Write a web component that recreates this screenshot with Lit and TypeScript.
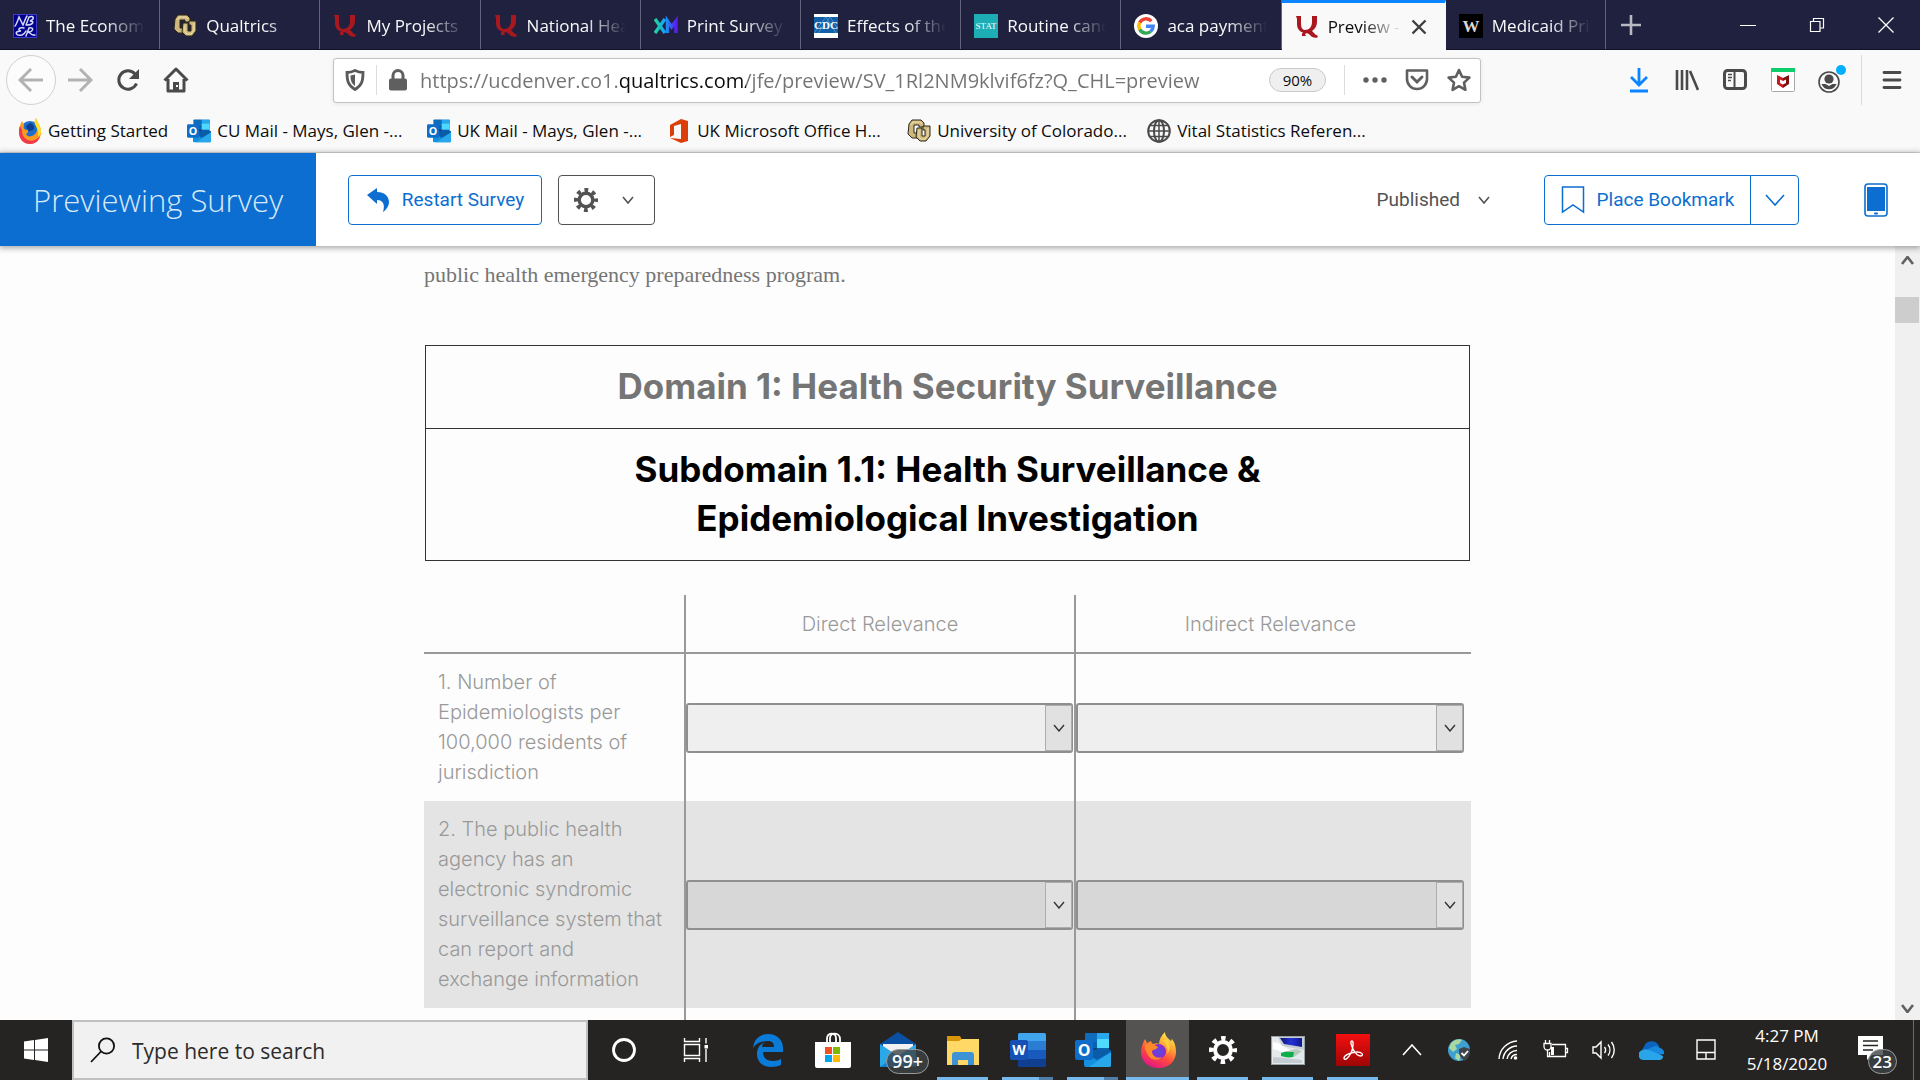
import { LitElement, html, svg, css, nothing } from "lit";
import type { TemplateResult } from "lit";
import { customElement } from "lit/decorators.js";
import { classMap } from "lit/directives/class-map.js";

/** Wraps drawing content in an svg of the given size. */
const draw = (w: number, h: number, content: unknown, viewBox = `0 0 ${w} ${h}`) =>
  html`<svg width=${w} height=${h} viewBox=${viewBox} aria-hidden="true">${content}</svg>`;

/* ---------- favicons and bookmark icons, 24px ---------- */

const nber = draw(24, 24, svg`
  <rect width="24" height="24" fill="#00008c"/>
  <rect x="0.5" y="0.5" width="23" height="23" fill="none" stroke="#3c3cc8"/>
  <g fill="none" stroke="#d4d8f4" stroke-width="1.500" stroke-linecap="round">
    <path d="M2 12c1-1 3-6 4-9l4 8c1-2 2-6 4-9M13 11l3-8c5-2 6 2 1 4c5 0 3 4-3 4"/>
    <path d="M11 14c-5-1-7 2-3 3c-7 0-6 5 1 4c2-1 3-2 4-4M13 22l3-8c6-1 4 4-1 4c2 0 3 4 7 3"/>
  </g>`);

const cu = draw(24, 24, svg`
  <path d="M2 5l3-4h9l3 3v4h-5V6H7v8h3v5H5l-4-4z" fill="#cfb87c" stroke="#2b2619" stroke-width="1"/>
  <path d="M10 9h5v8h3V11h-2V7h7v10l-4 5h-6l-4-4z" fill="#cfb87c" stroke="#2b2619" stroke-width="1"/>
  <path d="M4 6l2-3h7l2 2M12 11v7l2 2h4l3-4V9" fill="none" stroke="#f0e0ae" stroke-width="1"/>`);

const qualtrics = draw(24, 24, svg`
  <path d="M1 1h5v7c0 4 1 7 4 7c4 0 7-3 7-8V1h5v6c0 4-2 7-5 9l5 5l-5 1l-4-5c-7 2-11-2-11-8V4z" fill="#a9181f"/>
  <path d="M7 19c0-3 6-4 8-1l2 3l5-1l1 2c-3 2-6 0-8-2c-2-2-4-2-5-1l1 2h-4z" fill="#a9181f"/>`);

const xm = draw(24, 24, svg`
  <defs><linearGradient id="xm-grad" x1="0" y1="0" x2="1" y2="0">
    <stop offset="0" stop-color="#21d59b"/><stop offset="0.45" stop-color="#12a5f4"/><stop offset="1" stop-color="#5a1cf2"/>
  </linearGradient></defs>
  <g fill="none" stroke="url(#xm-grad)" stroke-width="3.4">
    <path d="M1 5l10 14M11 5L1 19M13.5 19V7l4.200 6l4.300-6v12"/>
  </g>`);

const cdc = draw(24, 24, svg`
  <rect width="24" height="24" fill="#fff"/>
  <rect y="3" width="24" height="16" fill="#1160a8"/>
  <path d="M0 19L12 3M4 19L16 3M12 3l10 16M16 3l8 12" stroke="#5c9bd2" stroke-width="0.8"/>
  <text x="12" y="15" text-anchor="middle" font-family="Liberation Serif, serif" font-weight="bold" font-size="11" fill="#fff">CDC</text>`);

const stat = draw(24, 24, svg`
  <rect width="24" height="24" fill="#1cadb5"/>
  <text x="12" y="15" text-anchor="middle" font-family="Liberation Serif, serif" font-size="9" fill="#fff">STAT</text>`);

const google = draw(24, 24, svg`
  <circle cx="12" cy="12" r="12" fill="#fff"/>
  <g fill="none" stroke-width="3.4">
    <path d="M17.400 7.200A7.200 7.200 0 0 0 5.700 8.600" stroke="#ea4335"/>
    <path d="M5.700 8.600A7.200 7.200 0 0 0 5.700 15.400" stroke="#fbbc05"/>
    <path d="M5.700 15.400A7.200 7.200 0 0 0 16.600 17.500" stroke="#34a853"/>
    <path d="M16.600 17.500A7.200 7.200 0 0 0 19.200 12.200H12" stroke="#4285f4"/>
  </g>`);

const wFav = draw(24, 24, svg`
  <rect width="24" height="24" fill="#000"/>
  <text x="12" y="18" text-anchor="middle" font-family="Liberation Serif, serif" font-weight="bold" font-size="17" fill="#d8d8d8">W</text>`);

const flame = (size: number) => draw(size, size, svg`
  <defs>
    <linearGradient id="ff-body" x1="0.8" y1="0" x2="0.3" y2="1">
      <stop offset="0" stop-color="#fff44f"/><stop offset="0.35" stop-color="#ffa436"/>
      <stop offset="0.65" stop-color="#ff4a3c"/><stop offset="1" stop-color="#e31587"/>
    </linearGradient>
    <radialGradient id="ff-core"><stop offset="0" stop-color="#5a4be0"/><stop offset="1" stop-color="#8a2bd0"/></radialGradient>
  </defs>
  <path d="M18 36C8 36 1 29 1 20C1 15 3 11 5 7l2 4l4-2c0 1 1 2 2 3c3-1 5-1 6 0c0-4 2-8 6-12c0 4 3 6 6 9c1-1 1-2 0-3c4 4 5 9 5 14c0 9-7 16-17 16z" fill="url(#ff-body)"/>
  <circle cx="18.500" cy="19.500" r="7.500" fill="url(#ff-core)"/>
  <path d="M5 13c4-2 9-1 13 2c-1 3-5 2-6 4c0 5 5 8 10 6c-3 4-11 4-14-2c-2-4-4-7-3-10z" fill="#ff8a2a"/>
  <path d="M22 8c4 3 7 8 5 14c4-5 3-10 0-14z" fill="#ffd23c"/>`, "0 0 36 36");

const oldFlame = draw(24, 28, svg`
  <circle cx="12" cy="14" r="10" fill="#1f6fd0"/>
  <path d="M12 6c2 0 5 3 4 6c-1 2-4 1-5 3c-1-3-3-4-3-6z" fill="#0d3f8f"/>
  <path d="M18 1c1 4 5 8 5 14c0 7-5 12-11 12S1 22 1 15C1 11 2 8 4 4l2 4c-1 3 0 4 2 5c3 0 3 2 0 4c1 3 5 3 8 1c4-3 4-7 1-11c-1-2 0-4 1-6z" fill="#ff9a1e"/>
  <path d="M1 15c0 8 5 12 11 12c5 0 9-3 10-8c-4 5-10 6-14 3c-3-2-4-5-4-9l-2-4c-1 2-1 4-1 6z" fill="#f03a4c"/>
  <path d="M18 1c1 4 5 8 5 14c-1 3-2 4-3 5c1-6-1-9-3-13c-1-2 0-4 1-6z" fill="#ffe226"/>`);

const outlook = (size: number) => draw(size, size, svg`
  <rect x="10" y="1" width="24" height="26" rx="1" fill="#0a63ad"/>
  <rect x="10" y="1" width="12" height="9" fill="#0f6cbd"/>
  <rect x="22" y="1" width="12" height="9" fill="#28a8ea"/>
  <rect x="22" y="7" width="12" height="9" fill="#50d9ff"/>
  <path d="M10 16h12v6H10z" fill="#14447d"/>
  <path d="M9 20h27v13a2 2 0 0 1-2 2H11a2 2 0 0 1-2-2z" fill="#1490df"/>
  <path d="M36 20v13a2 2 0 0 1-2 2H14z" fill="#28a8ea"/>
  <path d="M9 20l13 8L36 20v-2H9z" fill="#0a5ca8"/>
  <rect x="0" y="8" width="18" height="20" rx="2" fill="#0f6cc8"/>
  <text x="9" y="24" text-anchor="middle" font-family="Open Sans, sans-serif" font-weight="bold" font-size="16" fill="#fff">O</text>`, "0 0 36 36");

const office = draw(24, 24, svg`
  <path d="M3 6L14 0l7 2v20l-7 2L3 19l11 1V5L7 7v9l-4 2z" fill="#dc3e0a"/>`);

const globe = draw(24, 24, svg`
  <g fill="none" stroke="#4a4a4a" stroke-width="2">
    <circle cx="12" cy="12" r="10.800"/><ellipse cx="12" cy="12" rx="5" ry="10.800"/>
    <path d="M12 1v22M1 12h22M3 6.500h18M3 17.500h18" stroke-width="1.500"/>
  </g>`);

/* ---------- browser toolbar icons ---------- */

const backIcon = draw(26, 26, svg`<path d="M25 13H3M13 2L2 13l11 11" fill="none" stroke="#b2b2b2" stroke-width="3"/>`);
const forwardIcon = draw(26, 26, svg`<path d="M1 13h22M13 2l11 11l-11 11" fill="none" stroke="#b2b2b2" stroke-width="3"/>`);
const reloadIcon = draw(24, 24, svg`
  <path d="M20.500 15.500A9.200 9.200 0 1 1 19 6" fill="none" stroke="#4a4a4a" stroke-width="3"/>
  <path d="M23 1v10H13z" fill="#4a4a4a"/>`);
const homeIcon = draw(26, 26, svg`
  <path d="M1.500 13.500L13 2l11.500 11.500M5 12v12h16V12" fill="none" stroke="#4a4a4a" stroke-width="3" stroke-linejoin="round"/>
  <path d="M10 24v-9h6v9z" fill="#4a4a4a"/><rect x="13" y="18" width="2" height="2" fill="#f9f9fa"/>`);
const shieldIcon = draw(20, 22, svg`
  <path d="M10 1.500c3 1.500 6 2 8 2c0 8-1 13-8 17c-7-4-8-9-8-17c2 0 5-.5 8-2z" fill="none" stroke="#5a5a5a" stroke-width="2.800"/>
  <path d="M10 5.500l-4.500 1c0 5 1 8 4.500 10.500z" fill="#5a5a5a"/>`);
const lockIcon = draw(20, 22, svg`
  <path d="M5 10V6.500a5 5 0 0 1 10 0V10" fill="none" stroke="#5f5f5f" stroke-width="3"/>
  <rect x="1" y="9.500" width="18" height="12" rx="2" fill="#5f5f5f"/>`);
const dotsIcon = draw(24, 24, svg`<g fill="#5f5f5f"><circle cx="3" cy="12" r="2.700"/><circle cx="12" cy="12" r="2.700"/><circle cx="21" cy="12" r="2.700"/></g>`);
const pocketIcon = draw(24, 24, svg`
  <path d="M2 2.500h20V11a10 10 0 0 1-20 0z" fill="none" stroke="#5f5f5f" stroke-width="2.600" stroke-linejoin="round"/>
  <path d="M7 9l5 5l5-5" fill="none" stroke="#5f5f5f" stroke-width="3" stroke-linecap="round"/>`);
const starIcon = draw(24, 24, svg`
  <path d="M12 2l3.100 6.700l7.300.9l-5.400 5l1.400 7.200L12 18.200l-6.400 3.600L7 14.600l-5.400-5l7.300-.9z" fill="none" stroke="#5f5f5f" stroke-width="2.600" stroke-linejoin="round"/>`);
const downloadIcon = draw(20, 26, svg`
  <path d="M10 1v17M2 10l8 8l8-8M1 24h18" fill="none" stroke="#0a84ff" stroke-width="2.800"/>`);
const libraryIcon = draw(24, 22, svg`
  <path d="M2 1v20M7 1v20M12 1v20M15 2l8 19" fill="none" stroke="#4a4a4a" stroke-width="2.600"/>`);
const sidebarIcon = draw(24, 22, svg`
  <rect x="1.500" y="1.500" width="21" height="18" rx="3" fill="none" stroke="#4a4a4a" stroke-width="3"/>
  <path d="M11.500 2v17" stroke="#4a4a4a" stroke-width="2"/><path d="M5 5.500h4M5 8.500h4M5 11.500h3" stroke="#4a4a4a" stroke-width="1.300"/>`);
const mcafeeIcon = draw(24, 24, svg`
  <rect x="0.500" y="0.500" width="23" height="23" rx="1" fill="#fff" stroke="#a8a8a8"/>
  <rect width="24" height="4" fill="#0cce6b"/>
  <path d="M6 7l6 3v3l-3-1.500V15l3 1.500V20l-6-4z" fill="#c8191f"/>
  <path d="M18 7l-6 3v3l3-1.500V15l-3 1.500V20l6-4z" fill="#7e1013"/>`);
const accountIcon = draw(30, 30, svg`
  <circle cx="13" cy="17" r="10" fill="none" stroke="#4a4a4a" stroke-width="1.600"/>
  <circle cx="13" cy="14" r="4.600" fill="#4a4a4a"/><path d="M5.500 19h4l3.500 2l3.500-2h4a8 8 0 0 1-15 0z" fill="#4a4a4a"/>
  <circle cx="25" cy="5" r="5" fill="#00b0ff"/>`);
const menuIcon = draw(20, 20, svg`<path d="M2 2.500h16M2 10h16M2 17.500h16" stroke="#4a4a4a" stroke-width="2.800" stroke-linecap="round"/>`);
const closeTab = draw(16, 16, svg`<path d="M1.500 1.500l13 13M14.500 1.500l-13 13" stroke="#3f3f3f" stroke-width="2.400"/>`);
const plusIcon = draw(22, 22, svg`<path d="M11 1v20M1 11h20" stroke="#b9b9c4" stroke-width="2.600"/>`);
const minimizeIcon = draw(16, 16, svg`<path d="M0 8.500h16" stroke="#fff" stroke-width="1"/>`);
const restoreIcon = draw(16, 16, svg`<path d="M1.500 4.500h9.500v10H1.500zM4.500 4V1.500h10v9.500H11.500" fill="none" stroke="#fff" stroke-width="1.200"/>`);
const closeWindow = draw(16, 16, svg`<path d="M0.500 0.500l15 15M15.500 0.500l-15 15" stroke="#fff" stroke-width="1.300"/>`);

/* ---------- survey preview icons ---------- */

const gear = (size: number, color: string) => draw(size, size, svg`
  <circle cx="12" cy="12" r="6.800" fill="none" stroke=${color} stroke-width="3.400"/>
  <circle cx="12" cy="12" r="10" fill="none" stroke=${color} stroke-width="4" stroke-dasharray="3.8 4.054" stroke-dashoffset="1.900"/>`, "0 0 24 24");
const undoIcon = draw(24, 24, svg`<path d="M1 7L11 0v4c9 0 12 6 12 10c0 4-3 8-6 10c2-6 1-12-6-12v4z" fill="#0b6ed0"/>`);
const bookmarkIcon = draw(24, 28, svg`<path d="M1.500 1h21v25L12 19L1.500 26z" fill="none" stroke="#0b6ed0" stroke-width="1.500"/>`);
const phoneIcon = draw(24, 34, svg`
  <rect x="1" y="1" width="22" height="32" rx="3" fill="#fff" stroke="#0b6ed0" stroke-width="1.600"/>
  <rect x="3" y="4" width="18" height="24" fill="#0b6ed0"/><rect x="10" y="29.500" width="4" height="2" rx="1" fill="#0b6ed0"/>`);
const chevron = (w: number, h: number, color: string, stroke: number) =>
  draw(w, h, svg`<path d="M1 1L${w / 2} ${h - 1}L${w - 1} 1" fill="none" stroke=${color} stroke-width=${stroke}/>`);
const chevronUp = (w: number, h: number, color: string, stroke: number) =>
  draw(w, h, svg`<path d="M1 ${h - 1}L${w / 2} 1L${w - 1} ${h - 1}" fill="none" stroke=${color} stroke-width=${stroke}/>`);

/* ---------- taskbar icons ---------- */

const windowsLogo = draw(24, 24, svg`<path d="M0 3.500l10-1.400v9.400H0zM11 2l13-2v11.500H11zM0 12.500h10v9.400L0 20.500zM11 12.500h13V24l-13-2z" fill="#fff"/>`);
const magnifier = draw(26, 26, svg`<circle cx="16.500" cy="9" r="7.600" fill="none" stroke="#111" stroke-width="1.800"/><path d="M11 14.500L1 25" stroke="#111" stroke-width="1.800"/>`);
const cortana = draw(26, 26, svg`<circle cx="13" cy="13" r="10.500" fill="none" stroke="#fff" stroke-width="2.800"/>`);
const taskView = draw(26, 26, svg`
  <path d="M1.500 7.500h15v11h-15zM1.500 1v3.500h15V1M1.500 25v-3.500h15V25M23 1v5.500M23 12v13" fill="none" stroke="#fff" stroke-width="1.400"/>
  <rect x="21.500" y="8" width="3.500" height="3.500" fill="#fff"/>`);
const edge = draw(32, 34, svg`
  <path d="M1 15C2 6 8 1 16 1c9 0 15 6 15 14v4H11c0 6 4 9 10 9c3 0 6-1 8-2v6c-3 1-6 2-10 2C10 34 5 28 5 21c0-6 3-10 8-12c-2 1-3 3-3 5h12c0-4-2-6-6-6C9 8 4 10 1 15z" fill="#0a7bd9"/>`);
const store = draw(36, 36, svg`
  <path d="M12 12V7c0-7 9-7 9-1v6M15 12V6c0-6 10-6 10 1v5" fill="none" stroke="#fff" stroke-width="1.800"/>
  <path d="M0 10h36v24a2 2 0 0 1-2 2H2a2 2 0 0 1-2-2z" fill="#fff"/>
  <rect x="10" y="15" width="7" height="7" fill="#f25022"/><rect x="18" y="15" width="7" height="7" fill="#7fba00"/>
  <rect x="10" y="23" width="7" height="7" fill="#00a4ef"/><rect x="18" y="23" width="7" height="7" fill="#ffb900"/>`);
const mail = draw(36, 36, svg`
  <path d="M0 12L18 0l18 12v3H0z" fill="#0b4fa3"/>
  <path d="M3 12h30v6L18 28L3 18z" fill="#f2f2f2"/>
  <path d="M0 12l18 12l18-12v22a1 1 0 0 1-1 1H1a1 1 0 0 1-1-1z" fill="#29a9ea"/>
  <path d="M0 35L18 22l18 13z" fill="#1681d1"/>
  <path d="M3 12h30L18 23z" fill="#f2f2f2"/>`);
const explorer = draw(34, 32, svg`
  <path d="M1 2h13l2 4v6H1z" fill="#d89508"/>
  <path d="M1 7h12l3-2h17v26H1z" fill="#ffd866"/>
  <path d="M6 31V21a3 3 0 0 1 3-3h16a3 3 0 0 1 3 3v10h-6v-5H12v5z" fill="#3d93d6"/>`);
const word = draw(36, 36, svg`
  <rect x="8" y="1" width="28" height="34" rx="2" fill="#185abd"/>
  <path d="M8 9V3a2 2 0 0 1 2-2h24a2 2 0 0 1 2 2v6z" fill="#41a5ee"/>
  <rect x="8" y="9" width="28" height="9" fill="#2b7cd3"/><path d="M8 27h28v6a2 2 0 0 1-2 2H10a2 2 0 0 1-2-2z" fill="#103f91"/>
  <rect x="0" y="8" width="18" height="20" rx="2" fill="#1650b4"/>
  <text x="9" y="23" text-anchor="middle" font-family="Open Sans, sans-serif" font-weight="bold" font-size="14" fill="#fff">W</text>`);
const monitorApp = draw(34, 30, svg`
  <defs><linearGradient id="mon-screen" x1="0" y1="0" x2="1" y2="0"><stop offset="0" stop-color="#0d1470"/><stop offset="0.5" stop-color="#2233d8"/><stop offset="1" stop-color="#10188c"/></linearGradient></defs>
  <rect x="0.500" y="1.500" width="33" height="28" fill="#e4e9eb" stroke="#98a3a8"/>
  <path d="M7 2h26v13l-22-4z" fill="#c6ced3"/><path d="M9 3h22v9l-18-3z" fill="url(#mon-screen)"/>
  <path d="M2 7l5 1l15 9l-4 2L2 14z" fill="#fff"/>
  <path d="M13 17l12-3l6 2l-8 6l-11-1z" fill="#b5c9bd"/>
  <path d="M10 18c4-2 8-1 13-1l-1 5c-5 1-8 0-12-1z" fill="#0fae4c"/><path d="M2 22l12 1l17 2v3H2z" fill="#c5cdd2"/>`);
const acrobat = draw(34, 32, svg`
  <defs><linearGradient id="pdf-bg" x1="0" y1="0" x2="0" y2="1"><stop offset="0" stop-color="#f40f0f"/><stop offset="1" stop-color="#9c0606"/></linearGradient></defs>
  <rect width="34" height="32" fill="url(#pdf-bg)"/>
  <path d="M16 7c-2 0-1 4 1 8c2 4 5 7 8 7c3-1 1-4-4-4c-5 0-13 3-13 6c0 3 4 1 7-5c2-4 3-12 1-12z" fill="none" stroke="#fff" stroke-width="1.400"/>`);
const shieldGlobe = draw(24, 28, svg`
  <circle cx="11" cy="14" r="11" fill="#3f9fd0"/>
  <path d="M3 7c5-5 10-4 11-3l-3 4l-4 1l2 4l-4 3l-4-4zM8 17l5 2l-2 6l-4-3z" fill="#a9d8a0"/>
  <path d="M11 13l5-2l6 2c0 6-1 9-5 12c-5-3-6-6-6-12z" fill="#3f444a"/><path d="M13.500 17l2.500 2.500l4-4.500" fill="none" stroke="#fff" stroke-width="1.800"/>`);
const wifi = draw(20, 20, svg`
  <g fill="none" stroke="#fff" stroke-width="1.400"><path d="M1 19A19 19 0 0 1 19 1"/><path d="M5 19A14.500 14.500 0 0 1 19 6"/><path d="M9 19A10 10 0 0 1 19 10.500"/><path d="M13 19A6 6 0 0 1 19 14.500"/></g>
  <circle cx="17.500" cy="18" r="1.800" fill="#fff"/>`);
const battery = draw(26, 20, svg`
  <path d="M9 4.500h13.500v12H6.500V12M23 8.500h1.500v4H23M2.500 0v3M6.500 0v3M1 3.500h7v3a3.500 3.500 0 0 1-7 0zM4.500 10v6.500H7" fill="none" stroke="#fff" stroke-width="1.300"/>
  <rect x="8" y="7" width="3" height="8" fill="#fff"/>`);
const speaker = draw(24, 20, svg`
  <path d="M1 7h3l5-5v16l-5-5H1zM12.500 7a5 5 0 0 1 0 6M16 4.500a9 9 0 0 1 0 11M19.500 2a13 13 0 0 1 0 16" fill="none" stroke="#fff" stroke-width="1.400"/>`);
const cloud = draw(26, 22, svg`
  <path d="M5 16a5 5 0 0 1 0-8a8 8 0 0 1 15-1l-6 9z" fill="#0a64c0"/>
  <path d="M9 10l7-3a5 5 0 0 1 5 2a5 5 0 0 1 4 6l-12 2z" fill="#1788de"/>
  <path d="M5 21a5 5 0 0 1-1-10a7 7 0 0 1 6 0l14 6a4 4 0 0 1-3 4z" fill="#29a6ea"/>`);
const touchpad = draw(20, 22, svg`<path d="M1 1h18v19H1zM1 13.500h18M10 13.500V20" fill="none" stroke="#fff" stroke-width="1.400"/>`);
const notes = draw(26, 28, svg`<path d="M0 0h25v19H14l-5 5v-5H0z" fill="#fff"/><path d="M5 5h15M5 9.500h15M5 14h10" stroke="#262423" stroke-width="1.500"/>`);

/* ---------- data ---------- */

interface Tab { icon: TemplateResult; title: string; active?: boolean; }
const TABS: Tab[] = [
  { icon: nber, title: "The Econom" },
  { icon: cu, title: "Qualtrics" },
  { icon: qualtrics, title: "My Projects" },
  { icon: qualtrics, title: "National Hea" },
  { icon: xm, title: "Print Survey" },
  { icon: cdc, title: "Effects of the" },
  { icon: stat, title: "Routine canc" },
  { icon: google, title: "aca payment" },
  { icon: qualtrics, title: "Preview -", active: true },
  { icon: wFav, title: "Medicaid Pri" },
];

const BOOKMARKS = [
  { icon: oldFlame, title: "Getting Started" },
  { icon: outlook(24), title: "CU Mail - Mays, Glen -..." },
  { icon: outlook(24), title: "UK Mail - Mays, Glen -..." },
  { icon: office, title: "UK Microsoft Office H..." },
  { icon: cu, title: "University of Colorado..." },
  { icon: globe, title: "Vital Statistics Referen..." },
];

const COLUMNS = ["Direct Relevance", "Indirect Relevance"];
const ROWS = [
  "1. Number of\nEpidemiologists per\n100,000 residents of\njurisdiction",
  "2. The public health\nagency has an\nelectronic syndromic\nsurveillance system that\ncan report and\nexchange information",
];

interface App { name: string; icon: TemplateResult; state?: "open" | "multi" | "focused"; badge?: string; }
const APPS: App[] = [
  { name: "Edge", icon: edge },
  { name: "Store", icon: store },
  { name: "Mail", icon: mail, badge: "99+" },
  { name: "File Explorer", icon: explorer, state: "open" },
  { name: "Word", icon: word, state: "multi" },
  { name: "Outlook", icon: outlook(36), state: "multi" },
  { name: "Firefox", icon: flame(36), state: "focused" },
  { name: "Settings", icon: gear(28, "#fff"), state: "open" },
  { name: "Remote Desktop", icon: monitorApp, state: "open" },
  { name: "Acrobat", icon: acrobat, state: "open" },
];

const TRAY: [string, TemplateResult][] = [
  ["Show hidden icons", chevronUp(20, 12, "#fff", 1.6)],
  ["VPN", shieldGlobe],
  ["Network", wifi],
  ["Battery", battery],
  ["Volume", speaker],
  ["OneDrive", cloud],
  ["Touchpad", touchpad],
];

const base = css`
  *, *::before, *::after { box-sizing: border-box; }
  svg { display: block; flex: none; }
  button {
    display: flex; align-items: center; justify-content: center;
    padding: 0; border: 0; background: none; color: inherit; font: inherit;
  }
  a { color: inherit; text-decoration: none; }
  input { border: 0; padding: 0; background: none; font: inherit; outline: none; min-width: 0; }
`;

@customElement("browser-chrome")
export class BrowserChrome extends LitElement {
  static styles = [base, css`
    :host { display: block; font: 17px/24px "Open Sans", "Noto Sans", sans-serif; color: #0c0c0d; background: #f9f9fa; }
    .tabbar { display: flex; height: 50px; background: #20213f; color: #f9f9fa; border-bottom: 1px solid #12122b; }
    .tabs { display: flex; flex: 1; min-width: 0; }
    .tab {
      display: flex; flex: 1 1 0; align-items: center; gap: 9px; min-width: 0;
      padding: 2px 14px 0 13px; border-right: 1px solid #62637c;
    }
    .tab.active { height: 50px; background: #f9f9fa; color: #0c0c0d; border-top: 3px solid #0a84ff; border-right-color: #f9f9fa; padding: 0 18px 0 13px; }
    .title {
      flex: 1; min-width: 0; overflow: hidden; white-space: nowrap; text-align: left;
      mask-image: linear-gradient(to left, transparent, #000 40px);
    }
    .add { width: 50px; margin-right: 57px; }
    .win { width: 69px; }
    .toolbar { display: flex; align-items: center; height: 60px; padding: 0 3px 0 6px; color: #4a4a4a; }
    .back { width: 50px; height: 50px; border: 1px solid #d0d0d2; border-radius: 50%; background: #fcfcfd; }
    .nav { width: 48px; height: 48px; }
    .url {
      display: flex; flex: 1; align-items: center; height: 45px; margin: 0 134px 0 133px; padding: 0 0 0 11px;
      background: #fff; border: 1px solid #c2c2c4; border-radius: 3px; box-shadow: 0 1px 4px rgba(0, 0, 0, 0.08);
    }
    .rule { width: 1px; height: 30px; background: #dcdcde; }
    .rule.tall { height: 50px; margin: 0 5px 0 6px; }
    .rule.start { margin: 0 11px; }
    .rule.end { margin-right: 9px; }
    .address {
      flex: 1; font-size: 20px; height: 32px; margin: 0 12px; color: transparent;
      background: linear-gradient(to right, #737373 198px, #0c0c0d 198px 326px, #737373 326px);
      background-clip: text; -webkit-background-clip: text;
    }
    .zoom {
      width: 57px; height: 24px; margin-right: 18px; border: 1px solid #c9c9cb; border-radius: 12px;
      background: #efeff0; color: #0c0c0d; font-size: 15px;
    }
    .action { width: 42px; height: 40px; }
    .menu { width: 50px; height: 48px; }
    .bookmarks { display: flex; gap: 19px; height: 43px; padding: 0 18px; border-bottom: 1px solid #dcdcde; }
    .bookmark { display: flex; flex: none; align-items: center; gap: 6px; width: 221px; white-space: nowrap; }
    .bookmark:first-child { width: auto; }
  `];

  render() {
    return html`
      <header>
        <div class="tabbar">
          <div class="tabs" role="tablist">
            ${TABS.map((t) => html`
              <div class=${classMap({ tab: true, active: !!t.active })} role="tab" aria-selected=${t.active ? "true" : "false"}>
                ${t.icon}<span class="title">${t.title}</span>
                ${t.active ? html`<button aria-label="Close tab">${closeTab}</button>` : nothing}
              </div>`)}
          </div>
          <button class="add" aria-label="New tab">${plusIcon}</button>
          <button class="win" aria-label="Minimize">${minimizeIcon}</button>
          <button class="win" aria-label="Restore">${restoreIcon}</button>
          <button class="win" aria-label="Close">${closeWindow}</button>
        </div>
        <nav class="toolbar">
          <button class="back" aria-label="Back">${backIcon}</button>
          <button class="nav" aria-label="Forward">${forwardIcon}</button>
          <button class="nav" aria-label="Reload">${reloadIcon}</button>
          <button class="nav" aria-label="Home">${homeIcon}</button>
          <div class="url">
            <button aria-label="Tracking protection">${shieldIcon}</button>
            <span class="rule start"></span>
            <button aria-label="Site information">${lockIcon}</button>
            <input class="address" aria-label="Address"
              .value=${"https://ucdenver.co1.qualtrics.com/jfe/preview/SV_1Rl2NM9klvif6fz?Q_CHL=preview"} />
            <button class="zoom">90%</button>
            <span class="rule end"></span>
            <button class="action" aria-label="Page actions">${dotsIcon}</button>
            <button class="action" aria-label="Save to Pocket">${pocketIcon}</button>
            <button class="action" aria-label="Bookmark page">${starIcon}</button>
          </div>
          <button class="nav" aria-label="Downloads">${downloadIcon}</button>
          <button class="nav" aria-label="Library">${libraryIcon}</button>
          <button class="nav" aria-label="Sidebars">${sidebarIcon}</button>
          <button class="nav" aria-label="McAfee">${mcafeeIcon}</button>
          <button class="nav" aria-label="Account">${accountIcon}</button>
          <span class="rule tall"></span>
          <button class="menu" aria-label="Menu">${menuIcon}</button>
        </nav>
        <nav class="bookmarks">
          ${BOOKMARKS.map((b) => html`<a class="bookmark" href="#">${b.icon}<span>${b.title}</span></a>`)}
        </nav>
      </header>`;
  }
}

@customElement("preview-bar")
export class PreviewBar extends LitElement {
  static styles = [base, css`
    :host {
      display: flex; align-items: center; height: 93px; padding-right: 32px; background: #fff; z-index: 1;
      box-shadow: 0 1px 6px 1px rgba(0, 0, 0, 0.35); font: 19px/24px Roboto, "Liberation Sans", sans-serif; color: #525252;
    }
    .brand {
      display: flex; align-items: center; align-self: stretch; width: 316px; padding: 0 33px; margin-right: 32px;
      background: #0b6ed0; color: #d7e8f8; font: 300 31px/40px "Open Sans", sans-serif; white-space: nowrap;
    }
    .btn { height: 50px; border: 1px solid #0b6ed0; border-radius: 4px; color: #0b6ed0; background: #fff; white-space: nowrap; }
    .restart { width: 194px; gap: 12px; }
    .tools { justify-content: flex-start; width: 97px; gap: 24px; padding-left: 15px; margin-left: 16px; border-color: #525252; }
    .spacer { flex: 1; }
    .status { gap: 18px; margin-right: 54px; }
    .place { width: 207px; gap: 12px; border-radius: 4px 0 0 4px; }
    .more { width: 49px; margin: 0 65px 0 -1px; border-radius: 0 4px 4px 0; }
  `];

  render() {
    return html`
      <div class="brand">Previewing Survey</div>
      <button class="btn restart">${undoIcon}Restart Survey</button>
      <button class="btn tools" aria-label="Tools">${gear(24, "#525252")}${chevron(12, 8, "#525252", 1.6)}</button>
      <span class="spacer"></span>
      <button class="status">Published ${chevron(12, 8, "#525252", 1.6)}</button>
      <button class="btn place">${bookmarkIcon}Place Bookmark</button>
      <button class="btn more" aria-label="Bookmark options">${chevron(20, 12, "#0b6ed0", 1.6)}</button>
      <button aria-label="Mobile preview">${phoneIcon}</button>`;
  }
}

@customElement("survey-page")
export class SurveyPage extends LitElement {
  static styles = [base, css`
    :host { display: flex; flex: 1; min-height: 0; overflow: hidden; background: #fdfdfd; }
    .scroll { flex: 1; min-width: 0; overflow: hidden; }
    .page { width: 1047px; max-width: 100%; margin: 0 auto; }
    .intro { margin: 14px 0 56px; font: 22px/29px "Liberation Serif", serif; color: #757575; }
    .domain {
      margin: 0 1px 34px; border: 1px solid #333; text-align: center; color: #000;
      font: 700 35px/49px Inter, "Open Sans", sans-serif;
    }
    .domain h1, .domain h2 { margin: 0; font: inherit; }
    .domain h1 { padding: 16px 20px 17px; color: #757575; border-bottom: 1px solid #333; }
    .domain h2 { padding: 16px 20px 17px; }
    .matrix { width: 100%; border-collapse: collapse; table-layout: fixed; color: #999; font: 300 20px/30px Inter, "Open Sans", sans-serif; }
    .matrix th { font-weight: 300; }
    .matrix .col { height: 58px; border-left: 2px solid #999; }
    .matrix thead th, .matrix thead td { padding: 0; border-bottom: 2px solid #999; }
    .matrix .col:last-child, .matrix .cell:last-child { padding-right: 6px; }
    .matrix .first { width: 261px; }
    .matrix .second { width: 390px; }
    .matrix .label { padding: 13px 4px 14px 14px; text-align: left; white-space: pre-line; }
    .matrix .cell { padding: 0; border-left: 2px solid #999; }
    .matrix tbody tr:nth-child(even) { background: #e4e4e4; }
    .rest { height: 60px; }
    .pick { display: grid; margin-right: 1px; }
    .pick select, .arrow { grid-area: 1 / 1; }
    .pick select { appearance: none; width: 100%; height: 50px; border: 2px solid #8f8f8f; border-radius: 3px; background: #efefef; }
    tr:nth-child(even) .pick select { background: #d7d7d7; }
    .arrow {
      display: flex; align-items: center; justify-content: center; justify-self: end; pointer-events: none;
      width: 27px; margin: 2px 1px 2px 0; border: 1px solid #adadad; background: #e1e1e1;
    }
    .bar {
      display: flex; flex-direction: column; align-items: center; width: 25px; padding: 10px 1px 7px 0; background: #f0f0f0;
    }
    .thumb { align-self: stretch; height: 26px; margin: 32px 0 auto; background: #cdcdcd; }
  `];

  render() {
    return html`
      <main class="scroll">
        <div class="page">
          <p class="intro">public health emergency preparedness program.</p>
          <section class="domain">
            <h1>Domain 1: Health Security Surveillance</h1>
            <h2>Subdomain 1.1: Health Surveillance &amp;<br />Epidemiological Investigation</h2>
          </section>
          <table class="matrix">
            <colgroup><col class="first" /><col class="second" /><col /></colgroup>
            <thead>
              <tr><td></td>${COLUMNS.map((c) => html`<th class="col" scope="col">${c}</th>`)}</tr>
            </thead>
            <tbody>
              ${ROWS.map((r) => html`
                <tr>
                  <th class="label" scope="row">${r}</th>
                  ${COLUMNS.map((c) => html`
                    <td class="cell">
                      <div class="pick">
                        <select aria-label="${r.replace(/\n/g, " ")}: ${c}"><option></option></select>
                        <span class="arrow">${chevron(12, 8, "#333", 1.4)}</span>
                      </div>
                    </td>`)}
                </tr>`)}
              <tr><th class="rest"></th><td class="cell"></td><td class="cell"></td></tr>
            </tbody>
          </table>
        </div>
      </main>
      <div class="bar" aria-hidden="true">
        ${chevronUp(13, 9, "#606060", 2.6)}
        <div class="thumb"></div>
        ${chevron(13, 9, "#606060", 2.6)}
      </div>`;
  }
}

@customElement("task-bar")
export class TaskBar extends LitElement {
  static styles = [base, css`
    :host { display: flex; height: 60px; background: #262423; color: #fff; font: 17px/28px "Open Sans", "Noto Sans", sans-serif; }
    .start { width: 72px; }
    .search {
      display: flex; align-items: center; gap: 16px; width: 516px; padding: 0 16px;
      background: #f1f1f1; border: 2px solid #c0c0c0;
    }
    .search input { flex: 1; padding-top: 2px; font-size: 21px; color: #2b2b2b; }
    .search input::placeholder { color: #2b2b2b; opacity: 1; }
    .wide { width: 72px; }
    .apps { display: flex; gap: 2px; padding-left: 4px; }
    .app { position: relative; width: 63px; height: 60px; }
    .app::after { position: absolute; bottom: 0; left: 6px; right: 6px; height: 3px; }
    .app.open::after { content: ""; background: #76b9ed; }
    .app.multi::after { content: ""; background: linear-gradient(to left, #4f7fa6 14px, #76b9ed 14px); }
    .app.focused { background: #545352; }
    .app.focused::after { content: ""; left: 0; right: 0; background: #76b9ed; }
    .badge {
      position: absolute; right: 0; bottom: 6px; padding: 0 5px; border: 1px solid #9a9a9a; border-radius: 13px;
      background: rgba(60, 66, 70, 0.8); font-size: 18px; line-height: 23px; font-weight: 600;
    }
    .tray { display: flex; margin-left: auto; }
    .icon { width: 48px; }
    .icon:nth-child(7) { width: 60px; }
    .clock { width: 102px; text-align: center; padding-top: 2px; }
    .notes { position: relative; width: 66px; }
    .notes .badge { right: 7px; padding: 0 4px; font-size: 17px; }
    .peek { width: 7px; margin-left: 9px; border-left: 1px solid #6d6b6a; }
  `];

  render() {
    return html`
      <button class="start" aria-label="Start">${windowsLogo}</button>
      <label class="search">${magnifier}<input type="text" aria-label="Search" placeholder="Type here to search" /></label>
      <button class="wide" aria-label="Cortana">${cortana}</button>
      <button class="wide" aria-label="Task view">${taskView}</button>
      <div class="apps">
        ${APPS.map((a) => html`
          <button class="app ${a.state ?? ""}" aria-label=${a.name}>
            ${a.icon}${a.badge ? html`<span class="badge">${a.badge}</span>` : nothing}
          </button>`)}
      </div>
      <div class="tray">
        ${TRAY.map(([name, icon]) => html`<button class="icon" aria-label=${name}>${icon}</button>`)}
        <div class="clock"><div>4:27 PM</div><div>5/18/2020</div></div>
        <button class="notes" aria-label="Notifications">${notes}<span class="badge">23</span></button>
        <span class="peek"></span>
      </div>`;
  }
}

@customElement("app-root")
export class AppRoot extends LitElement {
  static styles = css`
    :host { display: flex; flex-direction: column; height: 100vh; overflow: hidden; }
  `;

  render() {
    return html`
      <browser-chrome></browser-chrome>
      <preview-bar></preview-bar>
      <survey-page></survey-page>
      <task-bar></task-bar>`;
  }
}
